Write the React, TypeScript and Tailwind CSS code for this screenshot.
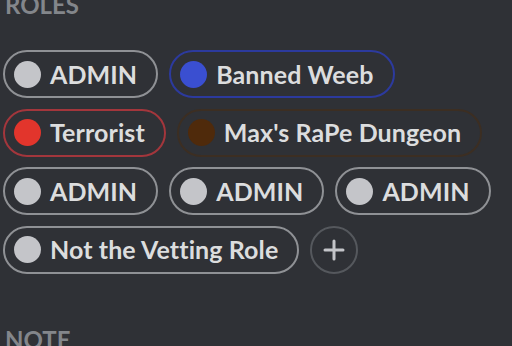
const roles = [
  { name: "ADMIN", border: "border-[#8f9195]", dot: "bg-[#c4c5c9]" },
  { name: "Banned Weeb", border: "border-[#2c3a9e]", dot: "bg-[#3a4fd1]" },
  { name: "Terrorist", border: "border-[#a3363c]", dot: "bg-[#e2352c]" },
  { name: "Max's RaPe Dungeon", border: "border-[#3c2e22]", dot: "bg-[#4f2a0b]" },
  { name: "ADMIN", border: "border-[#8f9195]", dot: "bg-[#c4c5c9]" },
  { name: "ADMIN", border: "border-[#8f9195]", dot: "bg-[#c4c5c9]" },
  { name: "ADMIN", border: "border-[#8f9195]", dot: "bg-[#c4c5c9]" },
  { name: "Not the Vetting Role", border: "border-[#8f9195]", dot: "bg-[#c4c5c9]" },
]

function RolePill({ name, border, dot }: { name: string; border: string; dot: string }) {
  return (
    <div className={`flex h-[48px] items-center gap-[9px] rounded-full border-2 pl-[9px] pr-[19px] ${border}`}>
      <span className={`h-[27px] w-[27px] shrink-0 rounded-full ${dot}`} />
      <span className="text-[25px] font-bold leading-none tracking-[0.1px] text-[#dcddde]">{name}</span>
    </div>
  )
}

export default function App() {
  return (
    <div className="h-[346px] w-[512px] overflow-hidden bg-[#2f3136] pl-[3px] font-['Lato','Noto_Sans',sans-serif]">
      <div className="-mt-[7px] pl-[2px] text-[24px] font-bold leading-[24px] text-[#83868b]">ROLES</div>
      <div className="mt-[33px] flex w-[500px] flex-wrap gap-x-[11px] gap-y-[10.5px]">
        {roles.map((r, i) => (
          <RolePill key={i} {...r} />
        ))}
        <button
          type="button"
          className="flex h-[48px] w-[48px] items-center justify-center rounded-full border-2 border-[#55585d]"
        >
          <svg width="22" height="22" viewBox="0 0 22 22" fill="none" stroke="#c4c5c9" strokeWidth="3" strokeLinecap="round">
            <path d="M11 2v18M2 11h18" />
          </svg>
        </button>
      </div>
      <div className="mt-[54px] pl-[2px] text-[24px] font-bold leading-[24px] text-[#83868b]">NOTE</div>
    </div>
  )
}
